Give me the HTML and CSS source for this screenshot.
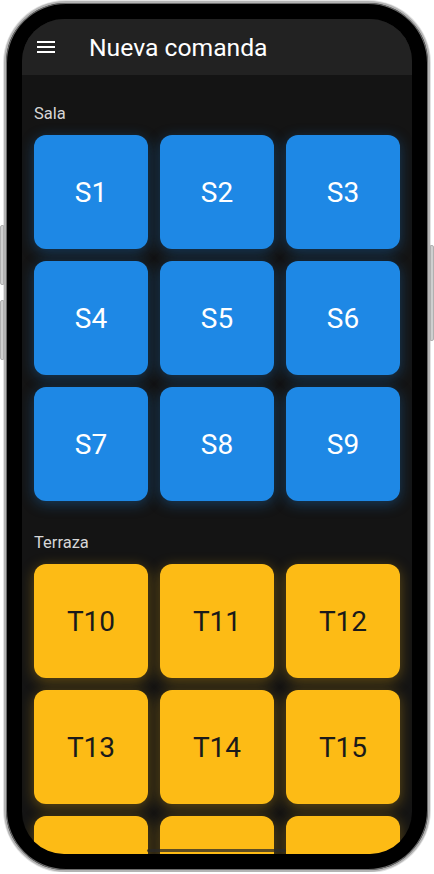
FILE: index.html
```html
<!DOCTYPE html>
<html lang="es">

<head>
    <meta charset="UTF-8">
    <meta name="viewport" content="width=device-width, initial-scale=1.0">
    <title>Nueva comanda</title>
    <link rel="stylesheet" href="styles.css">
</head>

<body>

    <div class="phone">
        <i class="side-btn vol-up"></i>
        <i class="side-btn vol-down"></i>
        <i class="side-btn power"></i>

        <div class="screen">
            <header class="appbar">
                <svg class="menu" width="18" height="12" viewBox="0 0 18 12">
                    <path d="M0 1h18M0 6h18M0 11h18" stroke="#fff" stroke-width="2" fill="none" />
                </svg>
                <h1>Nueva comanda</h1>
            </header>

            <main class="content">
                <section class="zone">
                    <h2>Sala</h2>
                    <div class="grid">
                        <button class="table sala">S1</button>
                        <button class="table sala">S2</button>
                        <button class="table sala">S3</button>
                        <button class="table sala">S4</button>
                        <button class="table sala">S5</button>
                        <button class="table sala">S6</button>
                        <button class="table sala">S7</button>
                        <button class="table sala">S8</button>
                        <button class="table sala">S9</button>
                    </div>
                </section>

                <section class="zone">
                    <h2>Terraza</h2>
                    <div class="grid">
                        <button class="table terraza">T10</button>
                        <button class="table terraza">T11</button>
                        <button class="table terraza">T12</button>
                        <button class="table terraza">T13</button>
                        <button class="table terraza">T14</button>
                        <button class="table terraza">T15</button>
                        <!-- last row runs under the bezel, labels not visible -->
                        <button class="table terraza" aria-label="T16"></button>
                        <button class="table terraza" aria-label="T17"></button>
                        <button class="table terraza" aria-label="T18"></button>
                    </div>
                </section>
            </main>

            <div class="home-bar"></div>
        </div>
    </div>

</body>

</html>
```

FILE: styles.css
```css
html,
body {
    margin: 0;
    padding: 0;
    background-color: #fff;
}

body {
    font-family: Roboto, "Noto Sans", sans-serif;
}

.phone {
    position: relative;
    box-sizing: border-box;
    width: 426px;
    height: 871px;
    margin: 1px 0 0 4px;
    padding: 16px;
    border: 2px solid #b4b4b4;
    border-radius: 62px;
    background-color: #000;
    box-shadow: 0 0 0 1px #e2e2e2, inset 0 0 0 1px #6c6c6c;
}

.side-btn {
    position: absolute;
    width: 4px;
    background-color: #cfcfcf;
    border: 1px solid #b0b0b0;
    box-sizing: border-box;
}

.vol-up {
    left: -6px;
    top: 222px;
    height: 60px;
    border-radius: 2px 0 0 2px;
}

.vol-down {
    left: -6px;
    top: 297px;
    height: 60px;
    border-radius: 2px 0 0 2px;
}

.power {
    right: -6px;
    top: 242px;
    height: 96px;
    border-radius: 0 2px 2px 0;
}

.screen {
    position: relative;
    display: flex;
    flex-direction: column;
    height: 100%;
    border-radius: 42px;
    overflow: hidden;
    background-color: #141414;
}

.appbar {
    display: flex;
    align-items: center;
    gap: 34px;
    height: 56px;
    padding-left: 15px;
    background-color: #222;
    flex-shrink: 0;
}

.menu {
    display: block;
}

.appbar h1 {
    margin: 0;
    font-size: 24.7px;
    font-weight: 400;
    color: #fff;
}

.content {
    flex: 1;
    overflow: hidden;
    padding: 29px 12px 0;
}

.zone+.zone {
    margin-top: 32px;
}

.zone h2 {
    margin: 0 0 11px 0;
    font-size: 16.5px;
    line-height: 20px;
    font-weight: 400;
    color: #d6d6d6;
}

.grid {
    display: grid;
    grid-template-columns: repeat(3, 114px);
    grid-auto-rows: 114px;
    gap: 12px;
}

.table {
    border: none;
    border-radius: 12px;
    font-family: Roboto, "Noto Sans", sans-serif;
    font-size: 28px;
    font-weight: 400;
    padding: 0;
}

.sala {
    background-color: #1e88e5;
    color: #fff;
    box-shadow: 0 3px 14px rgba(30, 136, 229, 0.35);
}

.terraza {
    background-color: #fdbb15;
    color: #1a1a1a;
    box-shadow: 0 3px 14px rgba(253, 187, 21, 0.35);
}

.home-bar {
    position: absolute;
    left: 125px;
    bottom: 2px;
    width: 139px;
    height: 3px;
    border-radius: 2px;
    background-color: rgba(40, 40, 40, 0.75);
}
```
